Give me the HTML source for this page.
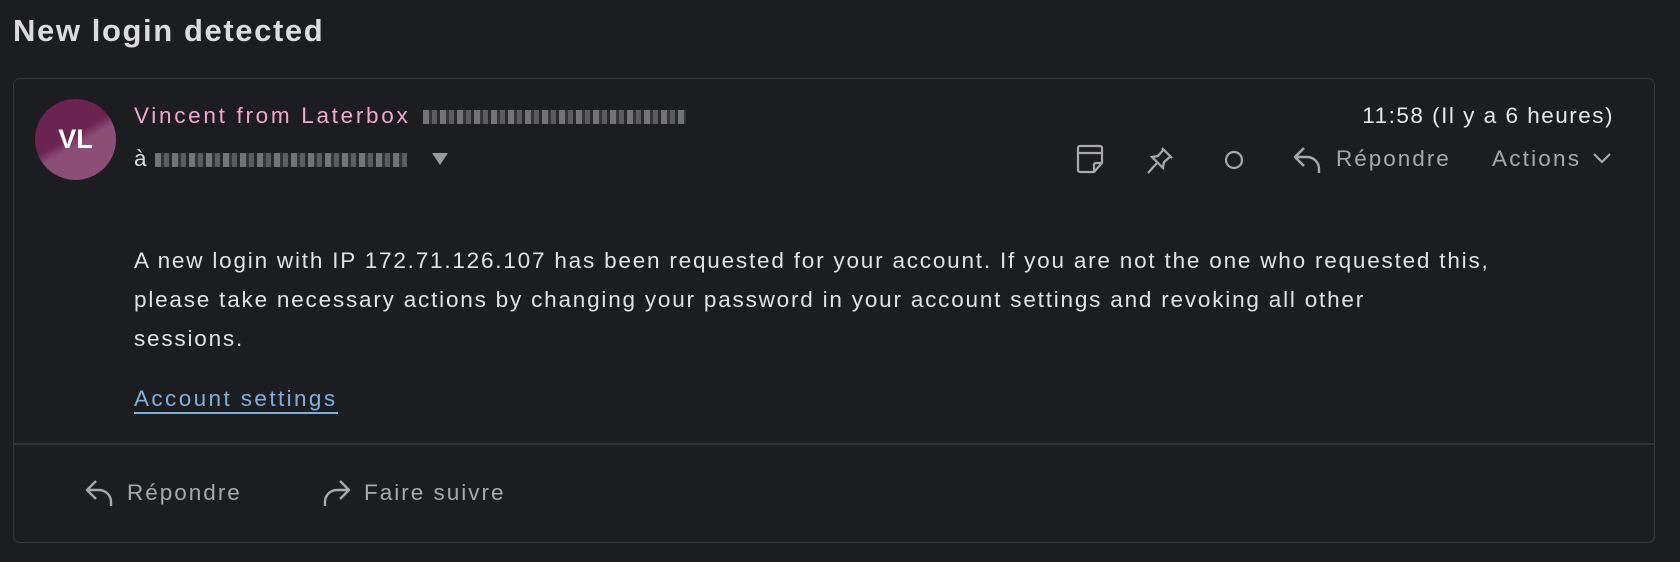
<!DOCTYPE html>
<html><head><meta charset="utf-8"><style>
body{margin:0;width:1680px;height:562px;background:#1c1d20;font-family:"Liberation Sans",sans-serif;position:relative;overflow:hidden;color:#e2e2e4}
.a{position:absolute;white-space:nowrap;letter-spacing:2px;font-size:22.5px}
h1{position:absolute;left:13px;top:13px;margin:0;font-size:31px;letter-spacing:1.6px;font-weight:bold;color:#dcdcde}
.card{position:absolute;left:13px;top:78px;width:1640px;height:463px;border:1.5px solid #36373b;border-radius:7px;background:#1c1d20}
.av{position:absolute;left:35px;top:99px;width:81px;height:81px;border-radius:50%;background:linear-gradient(150deg,#6b2350 0%,#6b2350 45%,#8c4e74 55%,#8c4e74 100%);color:#fff;font-weight:bold;font-size:27px;display:flex;align-items:center;justify-content:center}
.blur{position:absolute;height:14px;background:repeating-linear-gradient(90deg,#8a8a8e 0 6px,#3a3a3e 6px 9px,#6b6b70 9px 14px,#2a2a2e 14px 17px);opacity:.8}
.gray{color:#a9a9ad}
svg{position:absolute}
</style></head><body>
<h1>New login detected</h1>
<div class="card"></div>
<div class="av">VL</div>
<div class="a" style="left:134px;top:103px;color:#f4a6cf;letter-spacing:2.7px">Vincent from Laterbox</div>
<div class="blur" style="left:423px;top:110px;width:263px"></div>
<div class="a" style="left:134px;top:146px;color:#dcdcde">à</div>
<div class="blur" style="left:155px;top:153px;width:252px"></div>
<svg style="left:431px;top:152px" width="18" height="14"><path d="M1 1h16L9 13z" fill="#9a9a9e"/></svg>
<div class="a" style="right:66px;top:103px;color:#e6e6e8;letter-spacing:1.5px">11:58 (Il y a 6 heures)</div>
<svg style="left:1075px;top:143px" width="30" height="32" fill="none" stroke="#a9a9ad" stroke-width="2.2"><path d="M5 3h20a2 2 0 0 1 2 2v15l-8 9H5a2 2 0 0 1-2-2V5a2 2 0 0 1 2-2zM3 10h24M19 29v-7a2 2 0 0 1 2-2h6"/></svg>
<svg style="left:1145px;top:145px" width="30" height="32" fill="none" stroke="#a9a9ad" stroke-width="2.2"><path d="M17 3l10 10M19 4l-6 7-6 1 11 11 1-6 7-6M12 18L3 28"/></svg>
<svg style="left:1223px;top:149px" width="22" height="22" fill="none" stroke="#a9a9ad" stroke-width="2.2"><circle cx="11" cy="11" r="8"/></svg>
<svg style="left:1292px;top:145px" width="32" height="30" fill="none" stroke="#a9a9ad" stroke-width="2.4" stroke-linejoin="round"><path d="M12 3L3 12l9 9M3 12h12a12 12 0 0 1 12 12v4"/></svg>
<div class="a gray" style="left:1336px;top:146px">Répondre</div>
<div class="a gray" style="left:1492px;top:146px;letter-spacing:2.2px">Actions</div>
<svg style="left:1592px;top:152px" width="20" height="14" fill="none" stroke="#a9a9ad" stroke-width="2.2"><path d="M2 2l8 8 8-8"/></svg>
<div class="a" style="left:134px;top:241px;line-height:39px;color:#e2e2e4;letter-spacing:1.8px">A new login with IP 172.71.126.107 has been requested for your account. If you are not the one who requested this,<br>please take necessary actions by changing your password in your account settings and revoking all other<br>sessions.</div>
<div class="a" style="left:134px;top:386px;color:#7fb0dc;border-bottom:2px solid #7fb0dc;line-height:26px;letter-spacing:2.4px">Account settings</div>
<div style="position:absolute;left:14px;top:443px;width:1640px;height:1.5px;background:#34353a"></div>
<svg style="left:84px;top:478px" width="32" height="30" fill="none" stroke="#a9a9ad" stroke-width="2.4" stroke-linejoin="round"><path d="M12 3L3 12l9 9M3 12h12a12 12 0 0 1 12 12v4"/></svg>
<div class="a gray" style="left:127px;top:480px">Répondre</div>
<svg style="left:320px;top:478px" width="32" height="30" fill="none" stroke="#a9a9ad" stroke-width="2.4" stroke-linejoin="round"><path d="M20 3l9 9-9 9M29 12H17A12 12 0 0 0 5 24v4"/></svg>
<div class="a gray" style="left:364px;top:480px">Faire suivre</div>
</body></html>
